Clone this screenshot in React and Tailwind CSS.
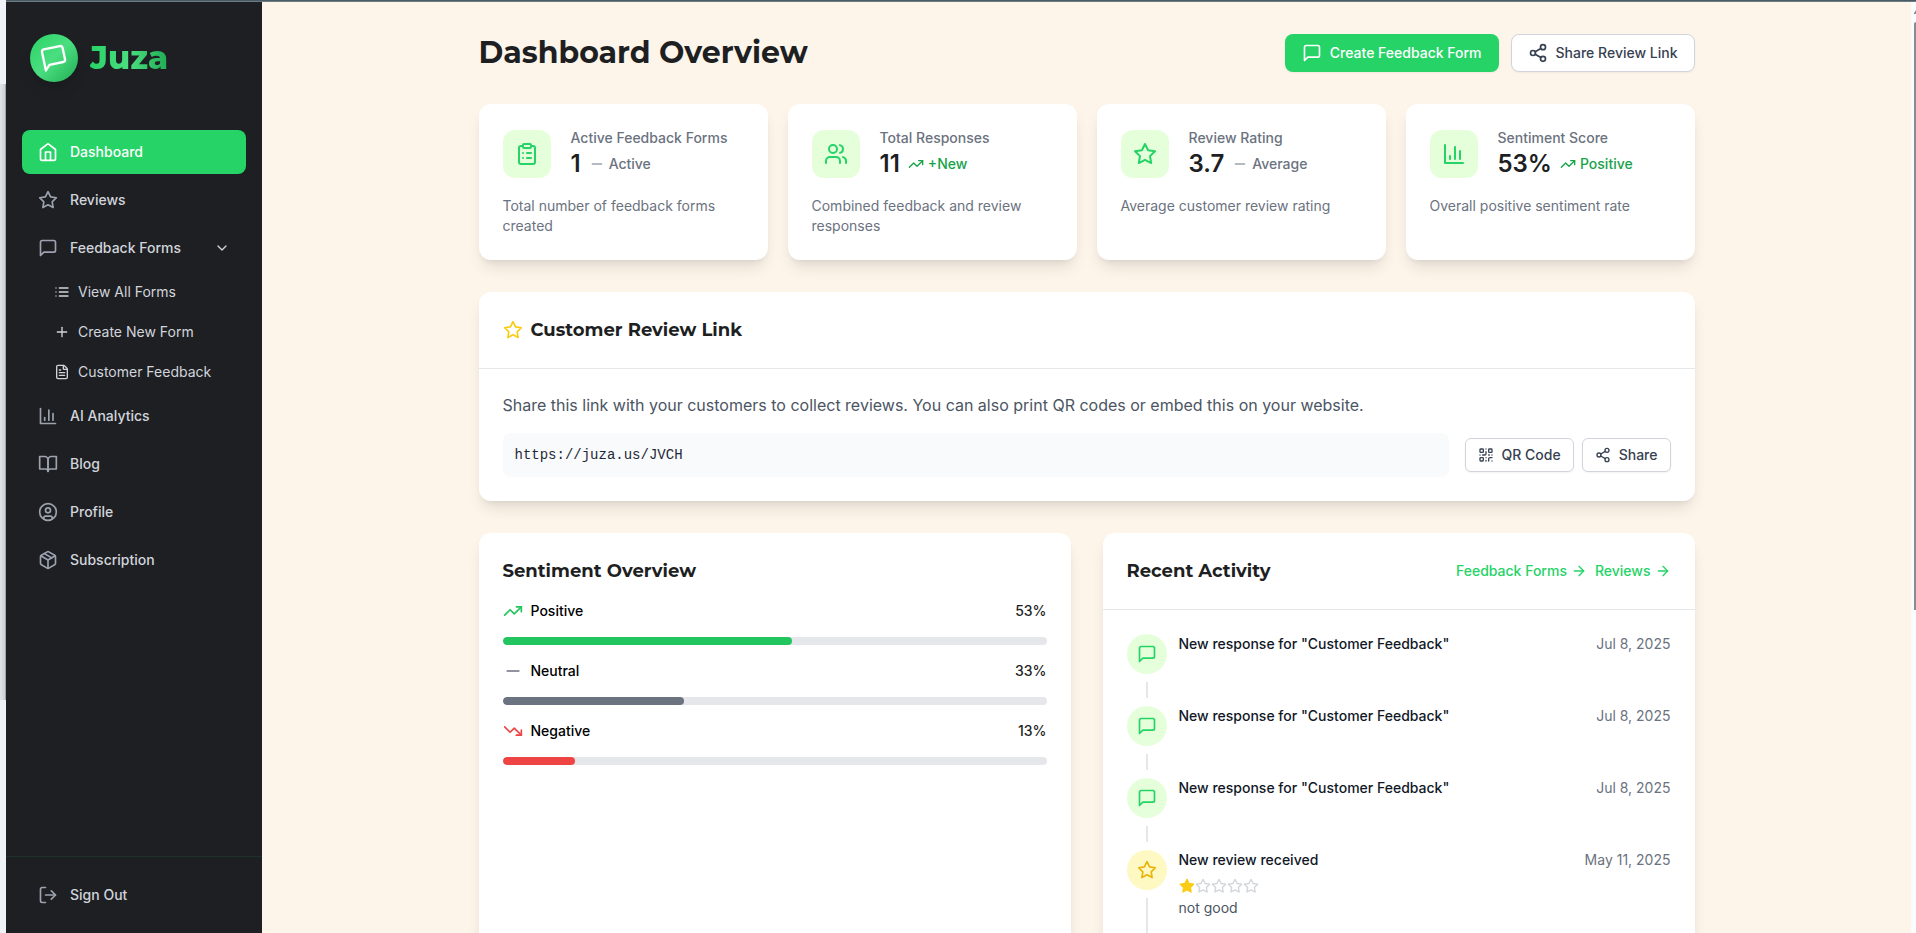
import {
  ArrowRight,
  ChevronDown,
  CircleUser,
  ClipboardList,
  FileText,
  LogOut,
  Minus,
  Package,
  Plus,
  QrCode,
  Share2,
  TrendingDown,
  TrendingUp,
  Users,
} from 'lucide-react'

const heading = "font-['Montserrat','Inter',sans-serif]"

function Svg({ className, children }) {
  return (
    <svg
      className={className}
      viewBox="0 0 24 24"
      fill="none"
      stroke="currentColor"
      strokeWidth="2"
      strokeLinecap="round"
      strokeLinejoin="round"
      aria-hidden="true"
    >
      {children}
    </svg>
  )
}

function BarChart({ className }) {
  return (
    <Svg className={className}>
      <path d="M3 3v18h18" />
      <path d="M18 17V9" />
      <path d="M13 17V5" />
      <path d="M8 17v-3" />
    </Svg>
  )
}

function Home({ className }) {
  return (
    <Svg className={className}>
      <path d="m3 9 9-7 9 7v11a2 2 0 0 1-2 2H5a2 2 0 0 1-2-2z" />
      <polyline points="9 22 9 12 15 12 15 22" />
    </Svg>
  )
}

function Message({ className }) {
  return (
    <Svg className={className}>
      <path d="M21 15a2 2 0 0 1-2 2H7l-4 4V5a2 2 0 0 1 2-2h14a2 2 0 0 1 2 2z" />
    </Svg>
  )
}

function Star({ className }) {
  return (
    <Svg className={className}>
      <polygon points="12 2 15.09 8.26 22 9.27 17 14.14 18.18 21.02 12 17.77 5.82 21.02 7 14.14 2 9.27 8.91 8.26 12 2" />
    </Svg>
  )
}

function Book({ className }) {
  return (
    <Svg className={className}>
      <path d="M2 3h6a4 4 0 0 1 4 4v14a3 3 0 0 0-3-3H2z" />
      <path d="M22 3h-6a4 4 0 0 0-4 4v14a3 3 0 0 1 3-3h7z" />
    </Svg>
  )
}

function ListIcon({ className }) {
  return (
    <Svg className={className}>
      <path d="M8 6h13M8 12h13M8 18h13M3 6h.01M3 12h.01M3 18h.01" />
    </Svg>
  )
}

const formLinks = [
  { label: 'View All Forms', icon: ListIcon },
  { label: 'Create New Form', icon: Plus },
  { label: 'Customer Feedback', icon: FileText },
]

const moreLinks = [
  { label: 'AI Analytics', icon: BarChart },
  { label: 'Blog', icon: Book },
  { label: 'Profile', icon: CircleUser },
  { label: 'Subscription', icon: Package },
]

const stats = [
  { name: 'Active Feedback Forms', value: '1', change: 'Active', up: false, icon: ClipboardList, text: 'Total number of feedback forms created' },
  { name: 'Total Responses', value: '11', change: '+New', up: true, icon: Users, text: 'Combined feedback and review responses' },
  { name: 'Review Rating', value: '3.7', change: 'Average', up: false, icon: Star, text: 'Average customer review rating' },
  { name: 'Sentiment Score', value: '53%', change: 'Positive', up: true, icon: BarChart, text: 'Overall positive sentiment rate' },
]

const sentiment = [
  { label: 'Positive', value: 53, width: 53.3, icon: TrendingUp, color: 'text-[#22c55e]', bar: 'bg-[#22c55e]' },
  { label: 'Neutral', value: 33, width: 33.3, icon: Minus, color: 'text-[#6b7280]', bar: 'bg-[#6b7280]' },
  { label: 'Negative', value: 13, width: 13.3, icon: TrendingDown, color: 'text-[#ef4444]', bar: 'bg-[#ef4444]' },
]

const activity = [
  { id: 1, title: 'New response for "Customer Feedback"', date: 'Jul 8, 2025' },
  { id: 2, title: 'New response for "Customer Feedback"', date: 'Jul 8, 2025' },
  { id: 3, title: 'New response for "Customer Feedback"', date: 'Jul 8, 2025' },
  { id: 4, title: 'New review received', date: 'May 11, 2025', rating: 1, comment: 'not good' },
]

function NavLink({ label, icon: Icon, active }) {
  return (
    <a
      href="#"
      className={
        active
          ? 'flex items-center gap-3 h-11 px-4 rounded-lg bg-[#25d366] text-white text-sm font-medium'
          : 'flex items-center gap-3 h-11 px-4 rounded-lg text-[#d1d5db] text-sm font-medium'
      }
    >
      <Icon className={active ? 'size-5 text-white' : 'size-5 text-[#9ca3af]'} />
      {label}
    </a>
  )
}

function Sidebar() {
  return (
    <aside className="w-64 shrink-0 h-full flex flex-col bg-[#1e1f23]">
      <div className="flex items-center gap-3 px-6 pt-8">
        <div className="size-12 rounded-full bg-linear-to-br from-[#25d366] via-[#4ade80] to-[#1fae54] flex items-center justify-center text-white shadow-lg">
          <Message className="size-7 -rotate-12" />
        </div>
        <span
          className={`${heading} text-[32px] leading-10 font-extrabold bg-linear-to-r from-[#25d366] via-[#4ade80] to-[#1fae54] bg-clip-text text-transparent`}
        >
          Juza
        </span>
      </div>

      <nav className="flex-1 flex flex-col gap-1 px-4 pt-12">
        <NavLink label="Dashboard" icon={Home} active />
        <NavLink label="Reviews" icon={Star} />
        <button className="flex items-center gap-3 h-11 px-4 text-[#d1d5db] text-sm font-medium">
          <Message className="size-5 text-[#9ca3af]" />
          Feedback Forms
          <ChevronDown className="size-4 ml-auto" />
        </button>
        <div className="flex flex-col gap-1 pl-8">
          {formLinks.map(({ label, icon: Icon }) => (
            <a key={label} href="#" className="flex items-center gap-2 h-9 text-sm text-[#d1d5db]">
              <Icon className="size-4" />
              {label}
            </a>
          ))}
        </div>
        {moreLinks.map((link) => (
          <NavLink key={link.label} {...link} />
        ))}
      </nav>

      <div className="border-t border-[#1f3029] p-4">
        <button className="flex items-center gap-3 h-11 px-4 text-[#d1d5db] text-sm font-medium">
          <LogOut className="size-5 text-[#9ca3af]" />
          Sign Out
        </button>
      </div>
    </aside>
  )
}

function StatCard({ name, value, change, up, icon: Icon, text }) {
  const Trend = up ? TrendingUp : Minus
  return (
    <div className="bg-white rounded-xl shadow-lg p-6 h-39">
      <div className="flex items-center gap-5">
        <div className="size-12 shrink-0 rounded-xl bg-[#e5ffdb] text-[#25d366] flex items-center justify-center">
          <Icon className="size-6" />
        </div>
        <div>
          <p className="text-sm font-medium text-[#6b7280]">{name}</p>
          <div className="flex items-center gap-2">
            <span className="text-2xl font-semibold text-[#1e1f23]">{value}</span>
            <span
              className={
                up
                  ? 'flex items-center gap-1 text-sm font-medium text-[#16a34a]'
                  : 'flex items-center gap-1 text-sm font-medium text-[#6b7280]'
              }
            >
              <Trend className={up ? 'size-4' : 'size-4 text-[#9ca3af]'} />
              {change}
            </span>
          </div>
        </div>
      </div>
      <p className="mt-4 text-sm text-[#6b7280]">{text}</p>
    </div>
  )
}

function ReviewLink() {
  return (
    <section className="bg-white rounded-xl shadow-lg">
      <div className="flex items-center gap-2 p-6 border-b border-[#e5e7eb]">
        <Star className="size-5 text-[#facc15]" />
        <h2 className={`${heading} text-lg font-bold text-[#1e1f23]`}>Customer Review Link</h2>
      </div>
      <div className="p-6">
        <p className="text-[#4b5563]">
          Share this link with your customers to collect reviews. You can also print QR codes or embed this on your website.
        </p>
        <div className="mt-4 flex items-center gap-4">
          <input
            aria-label="Review link"
            readOnly
            value="https://juza.us/JVCH"
            className="flex-1 min-w-0 h-11 px-3 rounded-lg bg-[#f9fafb] font-['Liberation_Mono',monospace] text-sm text-[#1f2937]"
          />
          <div className="flex gap-2">
            <button className="flex items-center gap-2 h-[34px] px-3 rounded-md border border-[#d1d5db] bg-white shadow-xs text-sm font-medium text-[#374151]">
              <QrCode className="size-4" />
              QR Code
            </button>
            <button className="flex items-center gap-2 h-[34px] px-3 rounded-md border border-[#d1d5db] bg-white shadow-xs text-sm font-medium text-[#374151]">
              <Share2 className="size-4" />
              Share
            </button>
          </div>
        </div>
      </div>
    </section>
  )
}

function SentimentOverview() {
  return (
    <section className="bg-white rounded-xl shadow-lg p-6">
      <h2 className={`${heading} text-lg font-bold text-[#1e1f23]`}>Sentiment Overview</h2>
      <div className="mt-4 flex flex-col gap-4">
        {sentiment.map(({ label, value, width, icon: Icon, color, bar }) => (
          <div key={label}>
            <div className="flex items-center justify-between h-5 text-sm font-medium text-black">
              <span className="flex items-center gap-2">
                <Icon className={`size-5 ${color}`} />
                {label}
              </span>
              <span className="text-[#1e1f23]">{value}%</span>
            </div>
            <div className="mt-4 h-2 rounded-full bg-[#e5e7eb] overflow-hidden">
              <div className={`h-full rounded-full ${bar}`} style={{ width: `${width}%` }} />
            </div>
          </div>
        ))}
      </div>
    </section>
  )
}

function ActivityItem({ title, date, rating, comment }) {
  return (
    <li className="flex gap-3">
      <div className="flex flex-col items-center">
        <div
          className={
            rating
              ? 'size-10 rounded-full bg-[#fef9c3] text-[#eab308] flex items-center justify-center'
              : 'size-10 rounded-full bg-[#e5ffdb] text-[#25d366] flex items-center justify-center'
          }
        >
          {rating ? <Star className="size-5" /> : <Message className="size-5" />}
        </div>
        <div className="flex-1 min-h-4 w-0.5 my-2 bg-[#e5e7eb]" />
      </div>
      <div className={rating ? 'flex-1 pb-16' : 'flex-1'}>
        <div className="flex justify-between text-sm">
          <p className="font-medium text-[#111827]">{title}</p>
          <time className="text-[#6b7280]">{date}</time>
        </div>
        {rating && (
          <>
            <div className="flex mt-2" role="img" aria-label={`${rating} out of 5 stars`}>
              {[1, 2, 3, 4, 5].map((n) => (
                <Star
                  key={n}
                  className={n <= rating ? 'size-4 text-[#facc15] fill-[#facc15]' : 'size-4 text-[#d1d5db]'}
                />
              ))}
            </div>
            <p className="mt-1 text-sm text-[#4b5563]">{comment}</p>
          </>
        )}
      </div>
    </li>
  )
}

function RecentActivity() {
  return (
    <section className="bg-white rounded-xl shadow-lg">
      <div className="flex items-center justify-between p-6 border-b border-[#e5e7eb]">
        <h2 className={`${heading} text-lg font-bold text-[#1e1f23]`}>Recent Activity</h2>
        <div className="flex gap-2 text-sm font-medium text-[#25d366]">
          <a href="#" className="flex items-center gap-1">
            Feedback Forms <ArrowRight className="size-4" />
          </a>
          <a href="#" className="flex items-center gap-1">
            Reviews <ArrowRight className="size-4" />
          </a>
        </div>
      </div>
      <ul className="p-6">
        {activity.map((item) => (
          <ActivityItem key={item.id} {...item} />
        ))}
      </ul>
    </section>
  )
}

export default function App() {
  return (
    <div className="h-screen flex overflow-hidden bg-[#eff3f8] font-['Inter',sans-serif]">
      {/* edge of the window behind */}
      <div className="w-1.5 shrink-0 pt-21">
        <div className="h-154 bg-linear-to-r from-[#e1e5ea] to-[#cdd1d6] border-r border-[#a3a7ab]" />
      </div>
      <div className="flex-1 min-w-0 flex flex-col">
        <div className="h-0.5 shrink-0 bg-[#4b5b66] border-b border-[#6c7a84]" />
        <div className="flex-1 min-h-0 flex">
          <Sidebar />
          <main className="flex-1 min-w-0 overflow-hidden bg-[#fdf5ea]">
            <div className="max-w-7xl mx-auto p-8 flex flex-col gap-8">
              <div className="flex items-center justify-between">
                <h1 className={`${heading} text-3xl font-bold text-[#1e1f23]`}>Dashboard Overview</h1>
                <div className="flex gap-3">
                  <button className="flex items-center gap-2 h-[38px] px-4 rounded-lg border border-transparent bg-[#25d366] text-white text-sm font-medium shadow-xs">
                    <Message className="size-5" />
                    Create Feedback Form
                  </button>
                  <button className="flex items-center gap-2 h-[38px] px-4 rounded-lg border border-[#d1d5db] bg-white text-[#374151] text-sm font-medium shadow-xs">
                    <Share2 className="size-5" />
                    Share Review Link
                  </button>
                </div>
              </div>

              <div className="grid grid-cols-4 gap-5">
                {stats.map((s) => (
                  <StatCard key={s.name} {...s} />
                ))}
              </div>

              <ReviewLink />

              <div className="grid grid-cols-2 gap-8">
                <SentimentOverview />
                <RecentActivity />
              </div>
            </div>
          </main>
          <div className="w-[5px] shrink-0 bg-[#fcfcfc] flex flex-col gap-2 pt-2 pl-[3px]">
            <svg className="w-full h-1 text-[#8b8b8b]" viewBox="0 0 2 4" fill="currentColor" aria-hidden="true">
              <path d="M2 0v4H0V3z" />
            </svg>
            <div className="h-147 rounded-tl-sm bg-[#8b8b8b]" />
          </div>
        </div>
      </div>
    </div>
  )
}
